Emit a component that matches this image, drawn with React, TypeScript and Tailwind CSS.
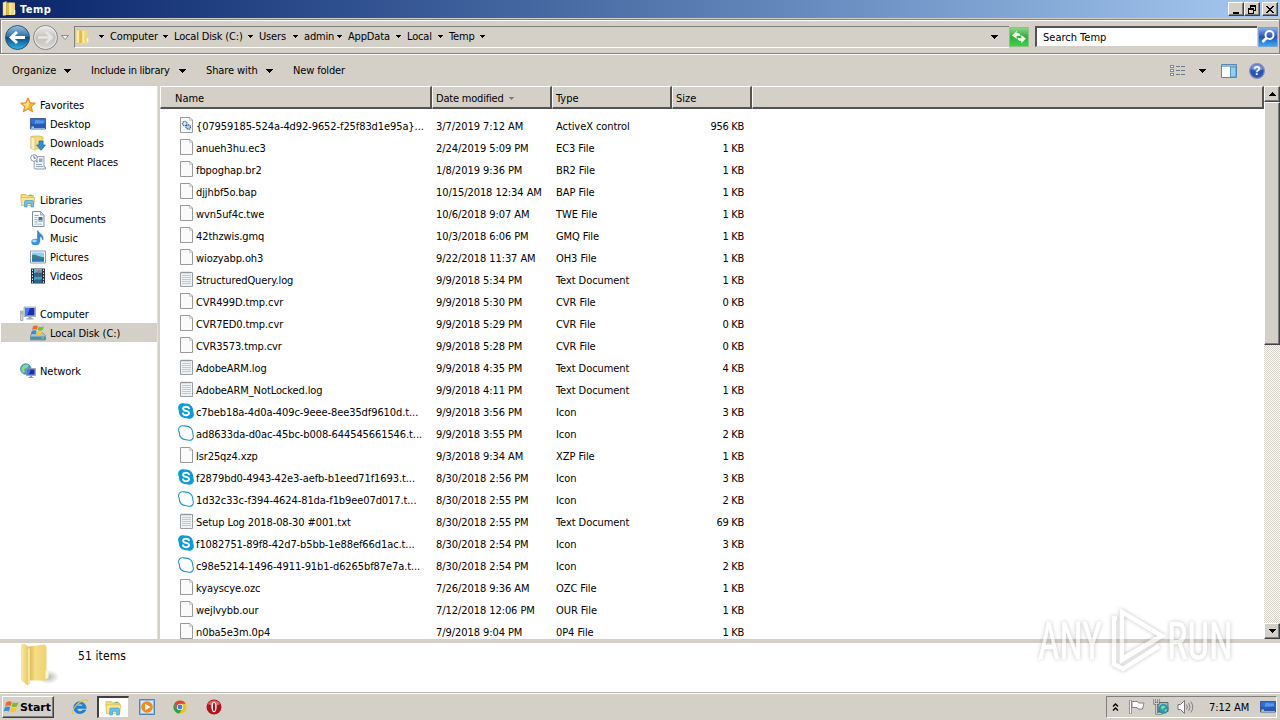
import type React from "react"

interface FileRow {
  icon: "page" | "log" | "ocx" | "skype" | "cloud"
  name: string
  date: string
  type: string
  size: string
}

const files: FileRow[] = [
  { icon: "ocx", name: "{07959185-524a-4d92-9652-f25f83d1e95a}...", date: "3/7/2019 7:12 AM", type: "ActiveX control", size: "956 KB" },
  { icon: "page", name: "anueh3hu.ec3", date: "2/24/2019 5:09 PM", type: "EC3 File", size: "1 KB" },
  { icon: "page", name: "fbpoghap.br2", date: "1/8/2019 9:36 PM", type: "BR2 File", size: "1 KB" },
  { icon: "page", name: "djjhbf5o.bap", date: "10/15/2018 12:34 AM", type: "BAP File", size: "1 KB" },
  { icon: "page", name: "wvn5uf4c.twe", date: "10/6/2018 9:07 AM", type: "TWE File", size: "1 KB" },
  { icon: "page", name: "42thzwis.gmq", date: "10/3/2018 6:06 PM", type: "GMQ File", size: "1 KB" },
  { icon: "page", name: "wiozyabp.oh3", date: "9/22/2018 11:37 AM", type: "OH3 File", size: "1 KB" },
  { icon: "log", name: "StructuredQuery.log", date: "9/9/2018 5:34 PM", type: "Text Document", size: "1 KB" },
  { icon: "page", name: "CVR499D.tmp.cvr", date: "9/9/2018 5:30 PM", type: "CVR File", size: "0 KB" },
  { icon: "page", name: "CVR7ED0.tmp.cvr", date: "9/9/2018 5:29 PM", type: "CVR File", size: "0 KB" },
  { icon: "page", name: "CVR3573.tmp.cvr", date: "9/9/2018 5:28 PM", type: "CVR File", size: "0 KB" },
  { icon: "log", name: "AdobeARM.log", date: "9/9/2018 4:35 PM", type: "Text Document", size: "4 KB" },
  { icon: "log", name: "AdobeARM_NotLocked.log", date: "9/9/2018 4:11 PM", type: "Text Document", size: "1 KB" },
  { icon: "skype", name: "c7beb18a-4d0a-409c-9eee-8ee35df9610d.t...", date: "9/9/2018 3:56 PM", type: "Icon", size: "3 KB" },
  { icon: "cloud", name: "ad8633da-d0ac-45bc-b008-644545661546.t...", date: "9/9/2018 3:55 PM", type: "Icon", size: "2 KB" },
  { icon: "page", name: "lsr25qz4.xzp", date: "9/3/2018 9:34 AM", type: "XZP File", size: "1 KB" },
  { icon: "skype", name: "f2879bd0-4943-42e3-aefb-b1eed71f1693.t...", date: "8/30/2018 2:56 PM", type: "Icon", size: "3 KB" },
  { icon: "cloud", name: "1d32c33c-f394-4624-81da-f1b9ee07d017.t...", date: "8/30/2018 2:55 PM", type: "Icon", size: "2 KB" },
  { icon: "log", name: "Setup Log 2018-08-30 #001.txt", date: "8/30/2018 2:55 PM", type: "Text Document", size: "69 KB" },
  { icon: "skype", name: "f1082751-89f8-42d7-b5bb-1e88ef66d1ac.t...", date: "8/30/2018 2:54 PM", type: "Icon", size: "3 KB" },
  { icon: "cloud", name: "c98e5214-1496-4911-91b1-d6265bf87e7a.t...", date: "8/30/2018 2:54 PM", type: "Icon", size: "2 KB" },
  { icon: "page", name: "kyayscye.ozc", date: "7/26/2018 9:36 AM", type: "OZC File", size: "1 KB" },
  { icon: "page", name: "wejlvybb.our", date: "7/12/2018 12:06 PM", type: "OUR File", size: "1 KB" },
  { icon: "page", name: "n0ba5e3m.0p4", date: "7/9/2018 9:04 PM", type: "0P4 File", size: "1 KB" },
]

// width = distance to the next crumb
const crumbs = [
  { label: "Computer", width: 64 },
  { label: "Local Disk (C:)", width: 85 },
  { label: "Users", width: 45 },
  { label: "admin", width: 44 },
  { label: "AppData", width: 59 },
  { label: "Local", width: 42 },
  { label: "Temp", width: 42 },
]

function Svg({ size = 16, children }: { size?: number; children: React.ReactNode }) {
  return (
    <svg width={size} height={size} viewBox="0 0 16 16" className="block shrink-0">
      {children}
    </svg>
  )
}

function Arrow({ className = "" }: { className?: string }) {
  return (
    <svg width="7" height="4" viewBox="0 0 7 4" shapeRendering="crispEdges" className={`block shrink-0 ${className}`}>
      <path d="M0 0h7v1H0zM1 1h5v1H1zM2 2h3v1H2zM3 3h1v1H3z" fill="#000" />
    </svg>
  )
}

function SmallArrow() {
  return (
    <svg width="5" height="3" viewBox="0 0 5 3" shapeRendering="crispEdges" className="block shrink-0">
      <path d="M0 0h5v1H0zM1 1h3v1H1zM2 2h1v1H2z" fill="#000" />
    </svg>
  )
}

function FolderIcon() {
  return (
    <Svg>
      <path d="M2 1.500 5.500.5V14L2 14.500z" fill="#faeaa6" stroke="#d3b454" strokeWidth=".5" />
      <path d="M5.500 1.500h3V14h-3z" fill="#e3bd4a" />
      <path d="M8 1.500h5.500l.5.7V14H8z" fill="#f3d673" />
      <path d="M8.500 2h2v12h-2z" fill="#fbeba8" />
      <path d="M12.800 9h1.500v4h-1.500z" fill="#fff7cf" />
    </Svg>
  )
}

function BigFolder() {
  return (
    <svg width="40" height="44" viewBox="0 0 40 44" className="block">
      <defs>
        <linearGradient id="bf1" x1="0" x2="1">
          <stop offset="0" stopColor="#f8e9a4" />
          <stop offset="1" stopColor="#e6c457" />
        </linearGradient>
        <linearGradient id="bf2" x1="0" x2="1">
          <stop offset="0" stopColor="#d9b84d" />
          <stop offset=".35" stopColor="#f4de86" />
          <stop offset="1" stopColor="#efd36d" />
        </linearGradient>
        <radialGradient id="bf3">
          <stop offset="0" stopColor="#000" stopOpacity=".3" />
          <stop offset="1" stopColor="#000" stopOpacity="0" />
        </radialGradient>
      </defs>
      <ellipse cx="28" cy="34" rx="11" ry="7" fill="url(#bf3)" />
      <path d="M9 3.500 25 1.500 26.500 4v33.500H9z" fill="url(#bf2)" />
      <path d="M1 1.500 4 .8 10 4.500v36L7.500 42.500 1 37z" fill="url(#bf1)" />
      <path d="M10 5v35.500l-2 1.500V6z" fill="#fdf6d2" opacity=".6" />
      <path d="M25.500 28c2.500-2 3 0 3 2v5l-3 1z" fill="#fdf6d2" />
    </svg>
  )
}

function ExplorerIcon({ size = 16 }: { size?: number }) {
  return (
    <Svg size={size}>
      <path d="M1 2.500h5l1 1.200h6.500v2.500H1z" fill="#f4df86" stroke="#cfa93c" strokeWidth=".7" />
      <path d="M.8 5.500h14l-1 8H1.500z" fill="#fbe992" stroke="#d9b648" strokeWidth=".7" />
      <path d="M9 2.700h3.500v1H9z" fill="#6ab04c" />
      <path d="M4.500 15V9.800c0-1 .5-1.300 1.300-1.300h6.400c.9 0 1.300.4 1.300 1.300V15H11v-3.500H7V15z" fill="#6fc3ea" stroke="#3a8fc4" strokeWidth=".6" />
    </Svg>
  )
}

function StarIcon() {
  return (
    <Svg>
      <path d="m8 .8 2.100 5 5.300.4-4.100 3.400 1.300 5.200L8 12l-4.600 2.800 1.300-5.200L.6 6.200l5.300-.4z" fill="#fdb52c" stroke="#e5791a" strokeWidth=".9" />
      <path d="m8 3 1.300 3.500L8 10.500 4.500 12.500 5.600 9 3 7l3.600-.4z" fill="#ffe58a" />
    </Svg>
  )
}

function DesktopIcon() {
  return (
    <Svg>
      <path d="M.5 2.500h15v10.500H.5z" fill="#2a58b4" stroke="#2b4a86" strokeWidth=".8" />
      <path d="M1 3h14v5C10 6 6 10 1 7z" fill="#2f6fd6" />
      <path d="M5 4.500c3-1.500 6 1 9-.5v3c-3 1-6 0-9 1z" fill="#6aa6f0" opacity=".7" />
      <path d="M1 12h14v1H1z" fill="#8fb2dc" />
      <path d="M1.500 10.500h2.500v1.500H1.500z" fill="#b9d874" />
    </Svg>
  )
}

function DownloadsIcon() {
  return (
    <Svg>
      <path d="M1 1.500 5 1h5l3 1v12H5l-4-.7z" fill="#f3da78" stroke="#caa744" strokeWidth=".6" />
      <path d="M1 1.500 5 3v12.500L1 13.500z" fill="#fbf0b9" stroke="#caa744" strokeWidth=".5" />
      <path d="M9 6h4v4h2.500L11 15.300 6.600 10H9z" fill="#2c93e0" stroke="#1769ae" strokeWidth=".7" />
    </Svg>
  )
}

function RecentIcon() {
  return (
    <Svg>
      <path d="M4.500 2.500H14v10.500h1.500v2H5l-1-1.500z" fill="#eef2f6" stroke="#7e8b98" strokeWidth=".8" />
      <path d="M6 6.500h2v2H6zM9 4.500h3.500V8H9zM6 10h6v1H6zM6 12h7v1H6z" fill="#8fa9c0" />
      <circle cx="4" cy="4" r="3.300" fill="#fff" stroke="#8a98a5" />
      <path d="M4 2v2.200h1.800" fill="none" stroke="#456" strokeWidth=".8" />
    </Svg>
  )
}

function DocumentsIcon() {
  return (
    <Svg>
      <path d="M2.500.5h8L14 4v11.500H2.500z" fill="#fafcfe" stroke="#7e8ea0" />
      <path d="M10.500.5V4H14z" fill="#cfdce8" stroke="#7e8ea0" strokeWidth=".7" />
      <path d="M4.500 4h4v.9h-4zM4.500 6.200h3v.9h-3zM4.500 8.300h3v.9h-3zM4.500 10.500h3v.9h-3zM4.500 12.700h7.500v.9H4.500z" fill="#8aa5c2" />
      <path d="M8.500 6h4v4.500h-4z" fill="#3a70ae" />
      <path d="M9 9h3v1H9z" fill="#a7cbe8" />
    </Svg>
  )
}

function MusicIcon() {
  return (
    <Svg>
      <path d="M8 .8c.6 3 6 3.500 5 9-.8-2-2-3.300-3.200-3.500V12H7.600V.8z" fill="#2f8ede" stroke="#1c6bb8" strokeWidth=".6" />
      <ellipse cx="5.500" cy="12" rx="4.200" ry="3.200" fill="#2f93e4" />
      <ellipse cx="4.500" cy="11" rx="2.300" ry="1.400" fill="#a8dafa" />
    </Svg>
  )
}

function PicturesIcon() {
  return (
    <Svg>
      <path d="M.5 2h15v12H.5z" fill="#fff" stroke="#8b9aaa" />
      <path d="M2 3.500h12v9H2z" fill="#8bd0f2" />
      <path d="M2 6c4-1.500 6 2 12 2v4.500H2z" fill="#3c7e8a" />
      <path d="M2 10.500c5-1.500 7-1 12-.5v2.500H2z" fill="#2578b8" />
    </Svg>
  )
}

function VideosIcon() {
  return (
    <Svg>
      <path d="M1 .5h14v15H1z" fill="#27303a" />
      <path d="M4 1h8v6.500H4z" fill="#5cb0da" />
      <path d="M4 8.500h8V15H4z" fill="#4a9ecb" />
      <path d="M4 5.500c3-2 4 0 8-1v3H4zM4 13c2-3 5 0 8-2v4H4z" fill="#2d618e" />
      <circle cx="9" cy="3.500" r="1.500" fill="#c46a58" />
      <path d="M2 1.500h1v1.500H2zM2 4.500h1V6H2zM2 7.500h1V9H2zM2 10.500h1V12H2zM2 13.300h1v1.400H2zM13 1.500h1v1.500h-1zM13 4.500h1V6h-1zM13 7.500h1V9h-1zM13 10.500h1V12h-1zM13 13.300h1v1.400h-1z" fill="#e8edf2" />
    </Svg>
  )
}

function ComputerIcon() {
  return (
    <Svg>
      <path d="M.5 5h2.500V14.500H.5z" fill="#cdd3da" stroke="#87909a" strokeWidth=".6" />
      <path d="M1.200 6.500h1.300v1.500H1.200z" fill="#5fbe4d" />
      <path d="M4 1h11.500v9.500H4z" fill="#d5dbe5" stroke="#7a86a0" strokeWidth=".6" />
      <path d="M5 2h9.500v7.500H5z" fill="#1b2fb5" />
      <path d="M5 2h5L7 9.500H5z" fill="#4d79e6" />
      <path d="M8.500 10.500h3v1.700h2v1.300h-7v-1.300h2z" fill="#9ba4b5" />
    </Svg>
  )
}

function WinFlag() {
  return (
    <>
      <path d="M1.800 3.200C3.800 2 5.600 2 7.300 3L6 7.200C4.300 6.300 2.700 6.300.6 7.400z" fill="#ef6a28" />
      <path d="M8.200 3.300c1.900.9 3.700.9 5.800-.2l-1.300 4.200c-2 1.100-3.900 1-5.700.2z" fill="#7cbb35" />
      <path d="M.3 8.400c2-1.100 3.700-1.100 5.400-.2l-1.300 4.300c-1.700-.9-3.400-.9-5.300.2z" fill="#3a8be0" />
      <path d="M6.700 8.500c1.900.8 3.700.9 5.700-.2l-1.300 4.300c-2 1.100-3.800 1-5.700.1z" fill="#fbc62b" />
    </>
  )
}

function DiskIcon() {
  return (
    <Svg>
      <path d="M.5 10.500 3 8h10l2.500 2.500v4.500H.5z" fill="#a9c4cf" stroke="#5e7c88" strokeWidth=".6" />
      <path d="M.5 11.500h15v3.300H.5z" fill="#4e8fa5" />
      <path d="M11.500 12.500H14v1h-2.500z" fill="#7de06a" />
      <g transform="translate(1.500 -1.500) scale(.88)">
        <WinFlag />
      </g>
    </Svg>
  )
}

function NetworkIcon() {
  return (
    <Svg>
      <circle cx="5.800" cy="6" r="5.300" fill="#3d9fd6" stroke="#27739f" strokeWidth=".6" />
      <path d="M2 4c2-3 5-3 7-2L7 5 4 6l1 3-2 1C1 8 1 6 2 4z" fill="#8fd884" />
      <path d="M6.500 5.500h9v7h-9z" fill="#cfd6e2" stroke="#6d7894" strokeWidth=".6" />
      <path d="M7.300 6.300h7.400v5.400H7.300z" fill="#1a31b4" />
      <path d="M7.300 6.300h3.500l-2 5.400H7.300z" fill="#4d79e6" />
      <path d="M10 12.500h2v1.500h1.500v1h-5v-1H10z" fill="#8f99ad" />
    </Svg>
  )
}

function PageShape({ children }: { children?: React.ReactNode }) {
  return (
    <Svg>
      <path d="M2.500.5h9.500l2.500 2.500v12.500h-12z" fill="#fafafa" stroke="#9a9a9a" />
      <path d="M11.500 1v2.500h2.500z" fill="#e0e0d2" stroke="#c4c4b4" strokeWidth=".6" />
      {children}
    </Svg>
  )
}

function FileIcon({ kind }: { kind: FileRow["icon"] }) {
  switch (kind) {
    case "log":
      return (
        <Svg>
          <path d="M2.500 1.500h12v14h-12z" fill="#f0f3f5" stroke="#9a9fa3" />
          <path d="M4 4h9v1H4zM4 6h9v1H4zM4 8h9v1H4zM4 10h9v1H4zM4 12h9v1H4z" fill="#bccad2" />
          <path d="M4 .5v2M6 .5v2M8 .5v2M10 .5v2M12 .5v2" stroke="#8b8b8b" strokeWidth=".7" />
        </Svg>
      )
    case "ocx":
      return (
        <PageShape>
          <circle cx="6.800" cy="6.600" r="2.200" fill="#dcebfa" stroke="#3d75b8" strokeWidth="1.300" strokeDasharray="1.200 .6" />
          <circle cx="10.300" cy="10" r="2.200" fill="#b7d3f0" stroke="#2d5f9e" strokeWidth="1.300" strokeDasharray="1.200 .6" />
        </PageShape>
      )
    case "skype":
      return (
        <Svg>
          <path d="M4.500.2C6 .1 6.600.6 8 .6c4.300 0 7.300 3.200 7.200 7.500 0 1 .8 2 .7 3.500a4.300 4.300 0 0 1-4.400 4.200c-1.400 0-2.300-.6-3.500-.6C3.600 15.200.7 12 .8 7.800.8 6.800 0 6 .1 4.500A4.300 4.300 0 0 1 4.500.2z" fill="#0a9bdc" />
          <path d="M11 5.300C10.500 4 9.300 3.700 8 3.700c-1.600 0-2.900.7-2.900 2 0 3 5.900 1.500 5.900 4.400 0 1.400-1.300 2.200-3 2.200-1.500 0-2.700-.6-3.100-2" fill="none" stroke="#fff" strokeWidth="1.900" strokeLinecap="round" />
        </Svg>
      )
    case "cloud":
      return (
        <Svg>
          <path d="M4.500.7C6 .6 6.600 1.100 8 1.100c4 0 6.800 3 6.700 7 0 1 .8 2 .7 3.500a3.800 3.800 0 0 1-3.900 3.700c-1.400 0-2.300-.6-3.500-.6-4.100 0-6.800-2.900-6.700-6.900C1.300 6.800.5 6 .6 4.500A3.800 3.800 0 0 1 4.500.7z" fill="#fff" stroke="#2893c8" strokeWidth="1.100" />
        </Svg>
      )
    default:
      return <PageShape />
  }
}

function SideItem({ icon, label, child, selected }: { icon: React.ReactNode; label: string; child?: boolean; selected?: boolean }) {
  return (
    <div className={`ml-px flex h-[19px] items-center gap-1 ${child ? "pl-[29px]" : "pl-[19px]"} ${selected ? "bg-[#d4d0c8]" : ""}`}>
      {icon}
      <span className="pt-[2px] tracking-[-0.05px]">{label}</span>
    </div>
  )
}

function HeaderCell({ className, children }: { className: string; children?: React.ReactNode }) {
  return (
    <div className={`flex h-[23px] items-center border-t border-r-2 border-b-2 border-l border-t-white border-r-[#55534f] border-b-[#55534f] border-l-white bg-[#d4d0c8] pt-[2px] ${className}`}>
      {children}
    </div>
  )
}

const raised = "border border-t-white border-l-white border-r-[#404040] border-b-[#404040] bg-[#d4d0c8] shadow-[inset_-1px_-1px_0_#808080]"

function CaptionButton({ children }: { children: React.ReactNode }) {
  return (
    <div className={`flex h-[14px] w-4 items-center justify-center ${raised}`}>
      <svg width="12" height="11" viewBox="0 0 12 11" shapeRendering="crispEdges" className="block shrink-0">
        {children}
      </svg>
    </div>
  )
}

function TitleBar() {
  return (
    <div className="flex h-[18px] shrink-0 items-center bg-linear-to-r from-[#0a246a] to-[#a6caf0] pr-[2px] pl-px">
      <FolderIcon />
      <span className="ml-[3px] flex-1 text-[11px] font-bold tracking-[0.5px] text-white">Temp</span>
      <CaptionButton>
        <path d="M3 8h6v2H3z" />
      </CaptionButton>
      <CaptionButton>
        <path d="M4 1h6v6H8V6h1V3H5v1H4zM2 4h6v6H2zM3 6v3h4V6z" fillRule="evenodd" />
      </CaptionButton>
      <div className="w-[2px]" />
      <CaptionButton>
        <path d="M2 2h2v1h1v1h2V3h1V2h2v1H9v1H8v1H7v1h1v1h1v1h1v1H8V8H7V7H5v1H4v1H2V8h1V7h1V6h1V5H4V4H3V3H2z" />
      </CaptionButton>
    </div>
  )
}

function NavBar() {
  return (
    <div className="mt-px flex h-[35px] shrink-0 items-center border border-[#808080] pr-px pl-px shadow-[inset_0_1px_0_#fff,inset_1px_0_0_#fff]">
      <svg width="72" height="28" viewBox="1 0 72 28" className="block shrink-0">
        <defs>
          <linearGradient id="back" x1="0" y1="0" x2="0" y2="1">
            <stop offset="0" stopColor="#9cc0dc" />
            <stop offset=".45" stopColor="#2f73aa" />
            <stop offset=".5" stopColor="#0d4a85" />
            <stop offset="1" stopColor="#2cb5e8" />
          </linearGradient>
          <linearGradient id="fwd" x1="0" y1="0" x2="0" y2="1">
            <stop offset="0" stopColor="#f0eeec" />
            <stop offset=".5" stopColor="#c3c0bc" />
            <stop offset="1" stopColor="#dddad6" />
          </linearGradient>
        </defs>
        <circle cx="16.500" cy="14.500" r="12" fill="url(#back)" stroke="#2e5878" />
        <circle cx="44.500" cy="14.500" r="12" fill="url(#fwd)" stroke="#85868a" />
        <circle cx="44.500" cy="14.500" r="10.800" fill="none" stroke="#efefef" strokeWidth=".8" />
        <path d="M24 14.500H11M16 9l-5.800 5.500L16 20" fill="none" stroke="#fff" strokeWidth="3" />
        <path d="M37 14.500h13M45 9l5.800 5.500L45 20" fill="none" stroke="#e6e5e3" strokeWidth="2.600" />
        <path d="M60.500 12.500h7l-3.500 4z" fill="#f3f3f3" stroke="#777" strokeWidth=".8" />
      </svg>
      <div className="flex h-[22px] flex-1 items-center border-t border-b border-l border-t-[#808080] border-b-white border-l-[#808080]">
        <div className="-ml-px">
          <FolderIcon />
        </div>
        <div className="mr-[6px] ml-[9px]">
          <SmallArrow />
        </div>
        {crumbs.map((c) => (
          <div key={c.label} className="flex shrink-0 items-center justify-between pr-[6px] tracking-[-0.17px]" style={{ width: c.width }}>
            <span>{c.label}</span>
            <SmallArrow />
          </div>
        ))}
        <Arrow className="mr-[11px] ml-auto" />
      </div>
      <svg width="20" height="20" viewBox="0 0 20 20" className="mr-[6px] block shrink-0">
        <defs>
          <linearGradient id="go" x1="0" y1="0" x2="0" y2="1">
            <stop offset="0" stopColor="#8fd68c" />
            <stop offset=".5" stopColor="#2fae3a" />
            <stop offset="1" stopColor="#3fd34a" />
          </linearGradient>
        </defs>
        <path d="M.5.5h19v19H.5z" fill="url(#go)" stroke="#8fc08a" />
        <path d="M3 8.500 8 3.500 7.500 6c3 0 4 1.500 4 3.500-1-.8-2.500-.9-4-.5L8 12zM17 11.500 12 16.500l.5-2.500c-3 0-4-1.500-4-3.500 1 .8 2.500.9 4 .5L12 8z" fill="#f4fff2" />
      </svg>
      <div className="flex h-[21px] w-[222px] items-center border-t-2 border-b border-l-2 border-t-[#55534f] border-b-[#d4d0c8] border-l-[#55534f] bg-white pl-[6px]">
        Search Temp
      </div>
      <svg width="20" height="20" viewBox="0 0 20 20" className="ml-px block shrink-0">
        <defs>
          <linearGradient id="find" x1="0" y1="0" x2="0" y2="1">
            <stop offset="0" stopColor="#8fb4e8" />
            <stop offset=".5" stopColor="#2450bd" />
            <stop offset="1" stopColor="#35b0f0" />
          </linearGradient>
        </defs>
        <path d="M.5.5h19v19H.5z" fill="url(#find)" stroke="#7ea2d6" />
        <circle cx="11.500" cy="8" r="4" fill="none" stroke="#fff" strokeWidth="2" />
        <path d="m8.500 11-4 4" stroke="#fff" strokeWidth="2.600" />
      </svg>
    </div>
  )
}

function Toolbar() {
  return (
    <div className="flex h-[32px] shrink-0 items-center border-t border-t-white pl-[12px]">
      <div className="flex w-[79px] items-center">
        <span className="w-[52px]">Organize</span>
        <Arrow />
      </div>
      <div className="flex w-[115px] items-center">
        <span className="w-[88px] tracking-[-0.25px]">Include in library</span>
        <Arrow />
      </div>
      <div className="flex w-[87px] items-center">
        <span className="w-[60px] tracking-[-0.1px]">Share with</span>
        <Arrow />
      </div>
      <span className="tracking-[-0.15px]">New folder</span>
      <svg width="16" height="14" viewBox="0 0 16 14" shapeRendering="crispEdges" className="ml-auto block">
        <path d="M.5 1.500h3v2h-3zM.5 5.500h3v2h-3zM.5 9.500h3v2h-3z" fill="#fff" stroke="#7c8794" />
        <path d="M6 2h4v1H6zM11 2h4v1h-4zM6 6h4v1H6zM11 6h4v1h-4zM6 10h4v1H6zM11 10h4v1h-4z" fill="#6d7a88" />
      </svg>
      <Arrow className="mr-[15px] ml-[13px]" />
      <svg width="16" height="14" viewBox="0 0 16 14" className="block">
        <path d="M.5.5h15v13H.5z" fill="#fff" stroke="#5d88b0" />
        <path d="M1 1h14v2H1z" fill="#8fbbe0" />
        <path d="M9.500 3h5.500v10H9.500z" fill="#8fd0ee" stroke="#4585b0" strokeWidth=".8" />
      </svg>
      <svg width="16" height="16" viewBox="0 0 16 16" className="mr-[15px] ml-[12px] block">
        <circle cx="8" cy="8" r="7.400" fill="#2a52b8" stroke="#8494b8" strokeWidth="1.200" />
        <path d="M2 6a6.200 6.200 0 0 1 12 0c-3 2-8 2-12 0z" fill="#6d92dd" />
        <text x="8" y="12.200" textAnchor="middle" fontSize="12" fontWeight="bold" fill="#fff" fontFamily="Liberation Sans, sans-serif">
          ?
        </text>
      </svg>
    </div>
  )
}

function Sidebar() {
  return (
    <div className="w-[157px] shrink-0 bg-white pt-[9px]">
      <SideItem icon={<StarIcon />} label="Favorites" />
      <SideItem child icon={<DesktopIcon />} label="Desktop" />
      <SideItem child icon={<DownloadsIcon />} label="Downloads" />
      <SideItem child icon={<RecentIcon />} label="Recent Places" />
      <div className="h-[19px]" />
      <SideItem icon={<ExplorerIcon />} label="Libraries" />
      <SideItem child icon={<DocumentsIcon />} label="Documents" />
      <SideItem child icon={<MusicIcon />} label="Music" />
      <SideItem child icon={<PicturesIcon />} label="Pictures" />
      <SideItem child icon={<VideosIcon />} label="Videos" />
      <div className="h-[19px]" />
      <SideItem icon={<ComputerIcon />} label="Computer" />
      <SideItem child selected icon={<DiskIcon />} label="Local Disk (C:)" />
      <div className="h-[19px]" />
      <SideItem icon={<NetworkIcon />} label="Network" />
    </div>
  )
}

function FileList() {
  return (
    <div className="flex min-w-0 flex-1 flex-col overflow-hidden bg-white">
      <div className="flex shrink-0">
        <HeaderCell className="w-[272px] pl-[14px]">Name</HeaderCell>
        <HeaderCell className="w-[120px] pl-[3px] tracking-[-0.2px]">
          Date modified
          <svg width="5" height="3" viewBox="0 0 5 3" shapeRendering="crispEdges" className="ml-[5px] block">
            <path d="M0 0h5v1H0zM1 1h3v1H1zM2 2h1v1H2z" fill="#808080" />
          </svg>
        </HeaderCell>
        <HeaderCell className="w-[120px] pl-[3px]">Type</HeaderCell>
        <HeaderCell className="w-[80px] pl-[3px]">Size</HeaderCell>
        <HeaderCell className="flex-1" />
      </div>
      <div className="pt-[6px]">
        {files.map((f) => (
          <div key={f.name} className="flex h-[22px] items-center pl-[18px] tracking-[-0.07px]">
            <div className="-mt-[2px] mr-[2px]">
              <FileIcon kind={f.icon} />
            </div>
            <span className="w-[240px] tracking-[-0.09px]">{f.name}</span>
            <span className="w-[120px]">{f.date}</span>
            <span className="w-[120px]">{f.type}</span>
            <span className="w-[68px] text-right tracking-[-0.3px]">{f.size}</span>
          </div>
        ))}
      </div>
    </div>
  )
}

const dither = "bg-[repeating-conic-gradient(#ffffff_0_25%,#d4d0c8_0_50%)] bg-[length:2px_2px]"

function Scrollbar() {
  return (
    <div className={`flex w-4 shrink-0 flex-col ${dither}`}>
      <div className={`flex h-4 items-center justify-center ${raised}`}>
        <Arrow className="rotate-180" />
      </div>
      <div className={`h-[243px] ${raised}`} />
      <div className="flex-1" />
      <div className={`flex h-4 items-center justify-center ${raised}`}>
        <Arrow />
      </div>
    </div>
  )
}

function Taskbar() {
  return (
    <div className="flex h-[28px] shrink-0 items-center border-t border-t-[#b8b5ae] bg-[#d4d0c8] pt-px pl-[2px] shadow-[inset_0_1px_0_#fff]">
      <div className={`flex h-[22px] w-[52px] items-center ${raised}`}>
        <svg width="17" height="16" viewBox="-1 0 16 16" className="block shrink-0">
          <WinFlag />
        </svg>
        <span className="text-[11px] font-bold tracking-[-0.1px] [font-stretch:normal] font-['DejaVu_Sans',sans-serif]">Start</span>
      </div>
      <svg width="18" height="18" viewBox="0 0 16 16" className="ml-[17px] block">
        <path d="M13.500 9.200H5.300c.2 3.300 4 3.500 5.300 1.500h2.700C10.800 15.500 2.300 14.800 2.500 8.400 2.700 2 12.800 1.200 13.500 9.200zM5.400 7.200h5.200C10.300 4.600 5.800 4.500 5.400 7.200z" fill="#1f7fd6" stroke="#1f7fd6" strokeWidth=".7" fillRule="evenodd" />
        <path d="M1.500 14.500C-1 12 6 1.500 13 1c2-.1 2.200 1.600 1.500 3.300.2-3-2.500-2.400-5-1C5 6 .8 12 1.800 13.500c.8 1 2.800 0 3.700-.6-1 1-3 2.400-4 1.600z" fill="#f3bf2f" />
      </svg>
      <div className="ml-[8px] flex h-[22px] w-[32px] items-center justify-center border border-t-2 border-l-2 border-t-[#404040] border-r-[#d4d0c8] border-b-[#d4d0c8] border-l-[#404040] bg-white">
        <ExplorerIcon size={17} />
      </div>
      <svg width="16" height="16" viewBox="0 0 16 16" className="ml-[10px] block">
        <path d="M.5.5h15v15H.5z" fill="#8fc1e8" stroke="#4a86bb" />
        <path d="M2 2h12v12H2z" fill="#d7eaf7" />
        <circle cx="8" cy="8" r="5.800" fill="#f4891c" />
        <path d="M6.200 4.800 11.500 8l-5.300 3.200z" fill="#fff" />
      </svg>
      <svg width="16" height="16" viewBox="0 0 16 16" className="ml-[17px] block">
        <circle cx="8" cy="8" r="6.600" fill="#f4c20d" />
        <path d="M2.300 4.700A6.600 6.600 0 0 1 13.700 4.700H8L5 9.500z" fill="#db4437" />
        <path d="M2.300 4.700a6.600 6.600 0 0 0 5 9.900L10.500 9.500 5 9.500z" fill="#2f9e58" />
        <circle cx="8" cy="8" r="3.100" fill="#fff" />
        <circle cx="8" cy="8" r="2.400" fill="#3f7ce0" />
      </svg>
      <svg width="16" height="16" viewBox="0 0 16 16" className="ml-[18px] block">
        <circle cx="8" cy="8" r="7.500" fill="#b3121c" />
        <path d="M2 5a7 7 0 0 1 12 0c-3 2-9 2-12 0z" fill="#e2656b" />
        <ellipse cx="8" cy="8" rx="2.600" ry="5.300" fill="#fff" />
        <ellipse cx="8" cy="8" rx="1.100" ry="4.300" fill="#a5101a" />
      </svg>
      <div className="mr-[3px] ml-auto flex h-[22px] w-[171px] items-center border border-t-[#808080] border-r-white border-b-white border-l-[#808080]">
        <svg width="7" height="9" viewBox="0 0 7 9" className="ml-[5px] block">
          <path d="M1 3.500 3.500 1 6 3.500M1 7.500 3.500 5 6 7.500" fill="none" stroke="#000" strokeWidth="1.400" />
        </svg>
        <svg width="16" height="16" viewBox="0 0 16 16" className="ml-[10px] block">
          <path d="M1.500 1v14" stroke="#777" strokeWidth="2.400" />
          <path d="M1.500 1.500v13" stroke="#fff" />
          <path d="M3 2.500h5.500l1 1.500H15l-1.500 6H9l-1-1.500H3z" fill="#fff" stroke="#777" strokeWidth=".9" />
        </svg>
        <svg width="16" height="16" viewBox="0 0 16 16" className="ml-[8px] block">
          <path d="M5 3.500h10v9H5z" fill="#7fc4dc" stroke="#666" />
          <path d="M1.500 0v4.500h4V0M3.500 4.500v10h6" fill="none" stroke="#555" strokeWidth="2" />
          <path d="M1.500 0v4.500h4V0M3.500 4.500v10h6" fill="none" stroke="#fff" strokeWidth=".7" />
          <circle cx="10.500" cy="10" r="4.500" fill="#2c9fae" stroke="#1f6d86" strokeWidth=".6" />
          <path d="M8 8c2-2 4-1 4 0s-2 1-2 2-2 0-2-2zM11 11l3-1-1 3z" fill="#84dba4" />
        </svg>
        <svg width="17" height="16" viewBox="0 0 17 16" className="ml-[8px] block">
          <path d="M1 5.500h2.500L7.500 1.500v13L3.500 10.500H1z" fill="#fff" stroke="#777" />
          <path d="M9.500 5.500q1.500 2.500 0 5M11.700 4q2.600 4 0 8M13.900 2.500q3.700 5.500 0 11" fill="none" stroke="#777" strokeWidth=".9" />
        </svg>
        <span className="ml-[15px] tracking-[-0.05px]">7:12 AM</span>
        <div className="ml-auto">
          <DesktopIcon />
        </div>
      </div>
    </div>
  )
}

function Watermark() {
  return (
    <svg width="212" height="84" viewBox="0 0 212 84" className="pointer-events-none absolute top-[600px] left-[1030px] overflow-visible opacity-60 drop-shadow-[0_0_2px_rgba(0,0,0,0.4)]">
      <g fill="#fff" stroke="#fff" strokeWidth=".6" fontFamily="Roboto, sans-serif" fontSize="51">
        <text x="8" y="59" textLength="64" lengthAdjust="spacingAndGlyphs">
          ANY
        </text>
        <text x="137" y="59" textLength="66" lengthAdjust="spacingAndGlyphs">
          RUN
        </text>
      </g>
      <g fill="none" stroke="#fff" strokeWidth="4.500">
        <path d="M92 46V12l40 24-37 21" />
        <path d="M87 18h-3v46l9 5 36-23" />
        <path d="M92 46v14l34-21" />
      </g>
    </svg>
  )
}

export default function App() {
  return (
    <div className="relative flex h-[720px] w-[1280px] flex-col overflow-hidden bg-[#d4d0c8] font-['DejaVu_Sans_Condensed','DejaVu_Sans',sans-serif] text-[11px] leading-none [font-stretch:condensed] whitespace-nowrap text-black">
      <TitleBar />
      <NavBar />
      <Toolbar />
      <div className="mb-[4px] flex h-[553px] shrink-0">
        <Sidebar />
        <div className="w-[3px] shrink-0 border-l border-l-[#e4e1dc]" />
        <FileList />
        <Scrollbar />
      </div>
      <div className="flex flex-1 bg-white pl-[20px]">
        <BigFolder />
        <span className="mt-[7px] ml-[18px] text-[12px] tracking-[0.1px]">51 items</span>
      </div>
      <Taskbar />
      <Watermark />
    </div>
  )
}
